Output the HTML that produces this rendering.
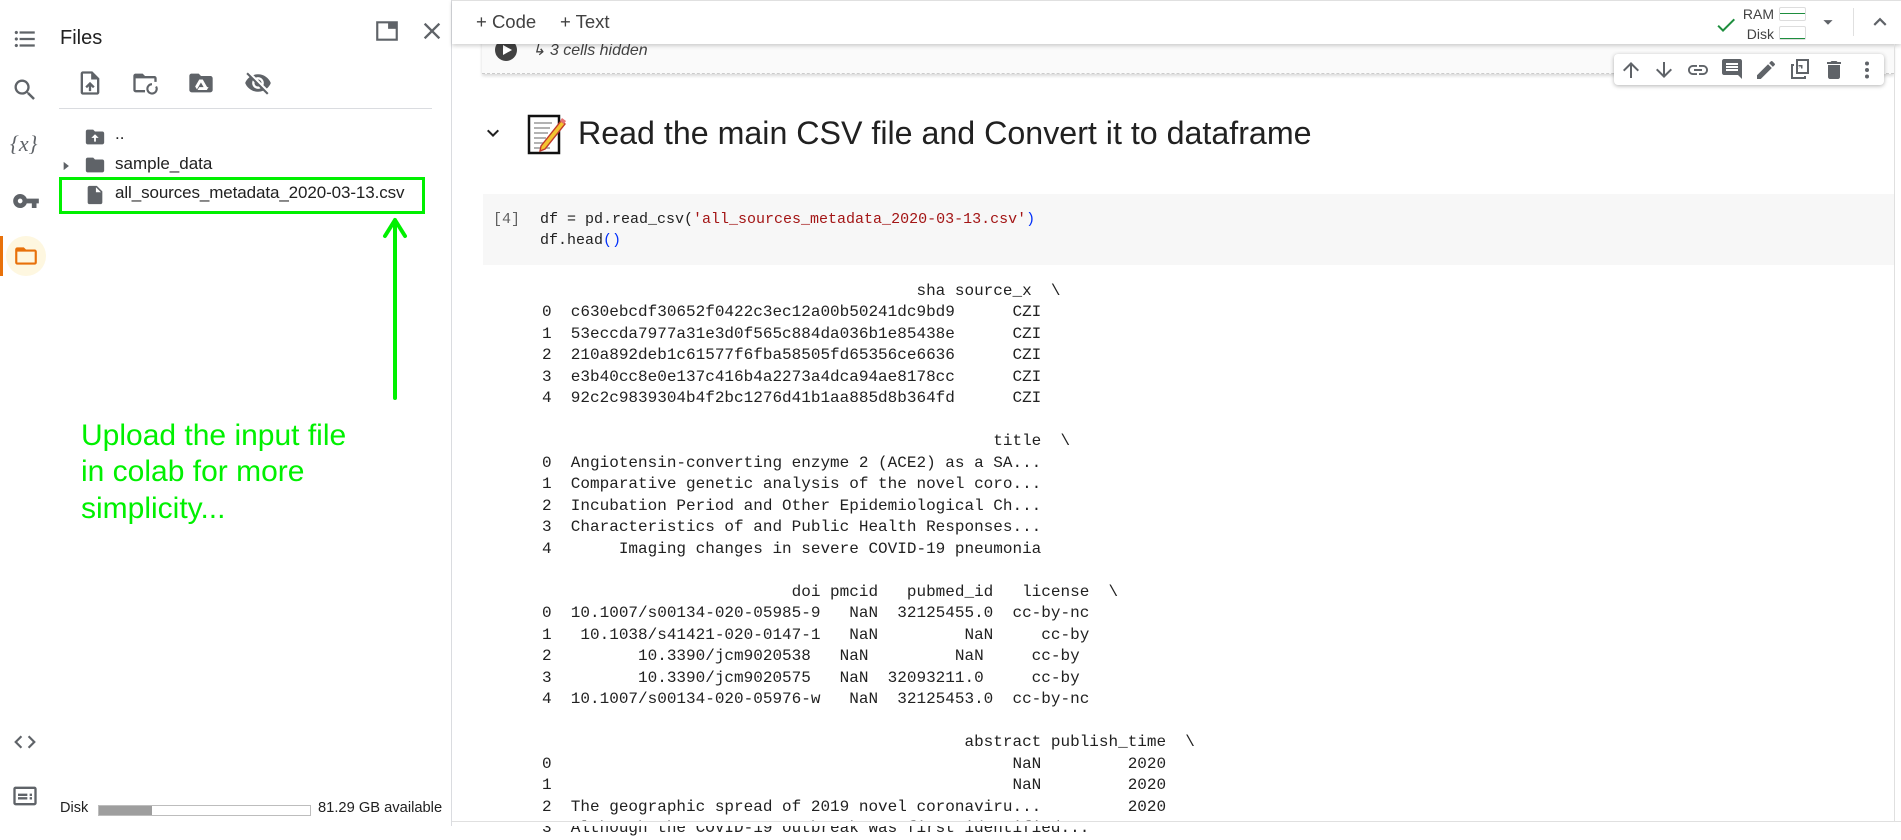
<!DOCTYPE html>
<html><head><meta charset="utf-8"><style>
*{margin:0;padding:0;box-sizing:border-box}
body{width:1901px;height:826px;overflow:hidden;background:#fff;font-family:"Liberation Sans",sans-serif;color:#212121;position:relative}
.a{position:absolute}
svg.i{position:absolute;fill:#5f6368}
pre{font-family:"Liberation Mono",monospace;font-size:16px;line-height:21.49px;color:#212121;position:absolute}
</style></head><body>
<!-- left rail -->
<div class="a" style="left:0;top:0;width:452px;height:826px;border-right:1px solid #dadce0"></div>
<svg class="i" style="left:12px;top:26px" width="26" height="26" viewBox="0 0 24 24"><path d="M4 10.5c-.83 0-1.5.67-1.5 1.5s.67 1.5 1.5 1.5 1.5-.67 1.5-1.5-.67-1.5-1.5-1.5zm0-6c-.83 0-1.5.67-1.5 1.5S3.170 7.5 4 7.5 5.5 6.83 5.5 6 4.83 4.5 4 4.5zm0 12c-.83 0-1.5.68-1.5 1.5s.68 1.5 1.5 1.5 1.5-.68 1.5-1.5-.67-1.5-1.5-1.5zM7 19h14v-2H7v2zm0-6h14v-2H7v2zm0-8v2h14V5H7z"/></svg>
<svg class="i" style="left:11px;top:76px" width="28" height="28" viewBox="0 0 24 24"><path d="M15.5 14h-.79l-.28-.27C15.41 12.59 16 11.11 16 9.5 16 5.91 13.09 3 9.5 3S3 5.91 3 9.5 5.910 16 9.5 16c1.61 0 3.09-.59 4.23-1.57l.27.28v.79l5 4.99L20.49 19l-4.99-5zm-6 0C7.01 14 5 11.99 5 9.5S7.01 5 9.5 5 14 7.01 14 9.5 11.99 14 9.5 14z"/></svg>
<div class="a" style="left:10px;top:131px;font-family:'Liberation Serif',serif;font-style:italic;font-size:22px;color:#5f6368">{<i>x</i>}</div>
<svg class="i" style="left:12px;top:187px" width="28" height="28" viewBox="0 0 24 24"><path d="M12.65 10C11.83 7.67 9.61 6 7 6c-3.31 0-6 2.69-6 6s2.69 6 6 6c2.61 0 4.83-1.67 5.65-4H17v4h4v-4h2v-4H12.65zM7 14c-1.1 0-2-.9-2-2s.9-2 2-2 2 .9 2 2-.9 2-2 2z"/></svg>
<div class="a" style="left:0;top:236px;width:3px;height:40px;background:#e8710a"></div>
<div class="a" style="left:6px;top:236px;width:40px;height:40px;border-radius:50%;background:#fef7e0"></div>
<svg class="i" style="left:13px;top:243px;fill:#e8710a" width="26" height="26" viewBox="0 0 24 24"><path d="M20 6h-8l-2-2H4c-1.1 0-1.99.9-1.99 2L2 18c0 1.1.9 2 2 2h16c1.1 0 2-.9 2-2V8c0-1.1-.9-2-2-2zm0 12H4V8h16v10z"/></svg>
<svg class="i" style="left:12px;top:729px" width="26" height="26" viewBox="0 0 24 24"><path d="M9.4 16.6L4.8 12l4.6-4.6L8 6l-6 6 6 6 1.4-1.4zm5.2 0l4.6-4.6-4.6-4.6L16 6l6 6-6 6-1.4-1.4z"/></svg>
<svg class="i" style="left:11px;top:782px" width="28" height="28" viewBox="0 0 24 24"><path d="M20 4H4c-1.1 0-2 .9-2 2v12c0 1.1.9 2 2 2h16c1.1 0 2-.9 2-2V6c0-1.1-.9-2-2-2zm0 14H4V6h16v12zM6 10h8v2H6zm0 3h8v2H6zm10-3h2v2h-2zm0 3h2v2h-2z"/></svg>

<!-- files panel -->
<div class="a" style="left:60px;top:27px;font-size:20px;color:#212121">Files</div>
<svg class="i" style="left:374px;top:18px" width="26" height="26" viewBox="0 0 24 24"><path d="M3 4h18v16H3z" fill="none" stroke="#5f6368" stroke-width="2"/><path d="M13 4h8v6h-8z"/></svg>
<svg class="i" style="left:418px;top:17px" width="28" height="28" viewBox="0 0 24 24"><path d="M19 6.41L17.59 5 12 10.59 6.41 5 5 6.41 10.59 12 5 17.59 6.41 19 12 13.41 17.59 19 19 17.59 13.41 12z"/></svg>
<svg class="i" style="left:76px;top:69px" width="28" height="28" viewBox="0 0 24 24"><path d="M14 2H6c-1.1 0-2 .9-2 2v16c0 1.1.9 2 2 2h12c1.1 0 2-.9 2-2V8l-6-6zm4 18H6V4h7v5h5v11zM8 15.01l1.41 1.41L11 14.84V19h2v-4.16l1.59 1.59L16 15.01 12.01 11z"/></svg>
<svg class="i" style="left:131px;top:69px" width="28" height="28" viewBox="0 0 24 24"><path d="M20 6h-8l-2-2H4c-1.1 0-2 .9-2 2v12c0 1.1.9 2 2 2h8v-2H4V8h16v3h2V8c0-1.1-.9-2-2-2z"/><path d="M18 13a4 4 0 1 0 3.5 2" fill="none" stroke="#5f6368" stroke-width="1.8"/></svg>
<svg class="i" style="left:187px;top:69px" width="28" height="28" viewBox="0 0 24 24"><path d="M20 6h-8l-2-2H4c-1.1 0-2 .9-2 2v12c0 1.1.9 2 2 2h16c1.1 0 2-.9 2-2V8c0-1.1-.9-2-2-2z"/><path d="M10.5 9l-3.5 6 1.5 2.5L12 11.5zM13.5 9h-3l4 7h3zM9 18h8l1.5-2.5h-8z" fill="#fff"/></svg>
<svg class="i" style="left:244px;top:69px" width="28" height="28" viewBox="0 0 24 24"><path d="M12 7c2.76 0 5 2.24 5 5 0 .65-.13 1.26-.36 1.83l2.92 2.92c1.51-1.26 2.7-2.89 3.43-4.75-1.73-4.39-6-7.5-11-7.5-1.4 0-2.74.25-3.98.7l2.16 2.16C10.74 7.13 11.35 7 12 7zM2 4.27l2.28 2.28.46.46C3.08 8.3 1.78 10.02 1 12c1.73 4.39 6 7.5 11 7.5 1.55 0 3.03-.3 4.38-.84l.42.42L19.73 22 21 20.73 3.27 3 2 4.27zM7.53 9.8l1.55 1.55c-.05.21-.08.43-.08.65 0 1.66 1.34 3 3 3 .22 0 .44-.03.65-.08l1.55 1.55c-.67.33-1.41.53-2.2.53-2.76 0-5-2.24-5-5 0-.79.2-1.53.53-2.2zm4.31-.78l3.15 3.15.02-.16c0-1.66-1.34-3-3-3l-.17.01z"/></svg>
<div class="a" style="left:59px;top:108px;width:373px;height:1px;background:#dadce0"></div>
<svg class="i" style="left:84px;top:126px" width="22" height="22" viewBox="0 0 24 24"><path d="M20 6h-8l-2-2H4c-1.1 0-2 .9-2 2v12c0 1.1.9 2 2 2h16c1.1 0 2-.9 2-2V8c0-1.1-.9-2-2-2z"/><path d="M12 9l-4 4h3v4h2v-4h3z" fill="#fff"/></svg>
<div class="a" style="left:115px;top:124px;font-size:17px">..</div>
<svg class="i" style="left:59px;top:159px" width="14" height="14" viewBox="0 0 24 24"><path d="M8 5v14l9-7z"/></svg>
<svg class="i" style="left:84px;top:154px" width="22" height="22" viewBox="0 0 24 24"><path d="M10 4H4c-1.1 0-1.99.9-1.99 2L2 18c0 1.1.9 2 2 2h16c1.1 0 2-.9 2-2V8c0-1.1-.9-2-2-2h-8l-2-2z"/></svg>
<div class="a" style="left:115px;top:154px;font-size:17px">sample_data</div>
<svg class="i" style="left:84px;top:184px" width="22" height="22" viewBox="0 0 24 24"><path d="M14 2H6c-1.1 0-2 .9-2 2v16c0 1.1.9 2 2 2h12c1.1 0 2-.9 2-2V8l-6-6zm-1 7V3.5L18.5 9H13z"/></svg>
<div class="a" style="left:115px;top:183px;font-size:17px;letter-spacing:-0.1px">all_sources_metadata_2020-03-13.csv</div>
<div class="a" style="left:59px;top:177px;width:366px;height:37px;border:3px solid #00f000"></div>
<svg class="a" style="left:380px;top:214px" width="30" height="186" viewBox="0 0 30 186"><path d="M15 184V6M5 22L15 6 25 22" fill="none" stroke="#00f000" stroke-width="4" stroke-linecap="round" stroke-linejoin="round"/></svg>
<div class="a" style="left:81px;top:418px;font-size:30px;line-height:36.4px;color:#00f000">Upload the input file<br>in colab for more<br>simplicity...</div>
<div class="a" style="left:60px;top:800px;font-size:14.5px">Disk</div>
<div class="a" style="left:98px;top:805px;width:213px;height:11px;border:1px solid #bdbdbd"><div style="width:53px;height:9px;background:#9e9e9e"></div></div>
<div class="a" style="left:318px;top:800px;font-size:14.7px">81.29 GB available</div>

<!-- main -->
<div class="a" style="left:482px;top:30px;width:1412px;height:44px;background:#fafafa;border-bottom:1px dashed #ccc;box-shadow:0 2px 3px rgba(0,0,0,.15)"></div>
<div class="a" style="left:495px;top:39px;width:22px;height:22px;border-radius:50%;background:#424242"></div>
<svg class="a" style="left:501px;top:44px" width="12" height="12" viewBox="0 0 12 12"><path d="M2 1l9 5-9 5z" fill="#fff"/></svg>
<div class="a" style="left:532px;top:40px;font-size:16px;font-style:italic;color:#424242">↳ 3 cells hidden</div>
<div class="a" style="left:452px;top:0;width:1449px;height:44px;background:#fff;box-shadow:0 2px 4px rgba(0,0,0,.18);border-top:1px solid #e0e0e0"></div>
<div class="a" style="left:476px;top:11px;font-size:18.5px;color:#424242">+ Code</div>
<div class="a" style="left:560px;top:11px;font-size:18.5px;color:#424242">+ Text</div>
<svg class="i" style="left:1714px;top:13px;fill:#1e8e3e" width="24" height="24" viewBox="0 0 24 24"><path d="M9 16.17L4.83 12l-1.42 1.41L9 19 21 7l-1.41-1.41z"/></svg>
<div class="a" style="left:1741px;top:4px;font-size:14px;color:#424242;line-height:20px;text-align:right;width:33px">RAM<br>Disk</div>
<div class="a" style="left:1779px;top:7px;width:27px;height:14px;border:1px solid #ddd;border-radius:2px"><div style="margin-top:5px;height:1px;background:#1e8e3e"></div></div>
<div class="a" style="left:1779px;top:26px;width:27px;height:14px;border:1px solid #ddd;border-radius:2px"><div style="margin-top:11px;height:1px;background:#1e8e3e"></div></div>
<svg class="i" style="left:1817px;top:11px" width="22" height="22" viewBox="0 0 24 24"><path d="M7 10l5 5 5-5z"/></svg>
<div class="a" style="left:1853px;top:8px;width:1px;height:28px;background:#e0e0e0"></div>
<svg class="i" style="left:1867px;top:9px" width="26" height="26" viewBox="0 0 24 24"><path d="M7.41 15.41L12 10.83l4.59 4.58L18 14l-6-6-6 6z"/></svg>
<div class="a" style="left:1894px;top:44px;width:1px;height:782px;background:#e0e0e0"></div>
<!-- cell toolbar -->
<div class="a" style="left:1614px;top:54px;width:270px;height:31px;background:#fff;border-radius:4px;box-shadow:0 1px 4px rgba(0,0,0,.3)"></div>
<svg class="i" style="left:1619px;top:58px" width="24" height="24" viewBox="0 0 24 24"><path d="M4 12l1.41 1.41L11 7.83V20h2V7.83l5.58 5.59L20 12l-8-8-8 8z"/></svg>
<svg class="i" style="left:1652px;top:58px" width="24" height="24" viewBox="0 0 24 24"><path d="M20 12l-1.41-1.41L13 16.17V4h-2v12.17l-5.58-5.59L4 12l8 8 8-8z"/></svg>
<svg class="i" style="left:1686px;top:58px" width="24" height="24" viewBox="0 0 24 24"><path d="M3.9 12c0-1.71 1.39-3.1 3.1-3.1h4V7H7c-2.76 0-5 2.24-5 5s2.24 5 5 5h4v-1.9H7c-1.71 0-3.1-1.39-3.1-3.1zM8 13h8v-2H8v2zm9-6h-4v1.9h4c1.71 0 3.1 1.39 3.1 3.1s-1.39 3.1-3.1 3.1h-4V17h4c2.76 0 5-2.24 5-5s-2.24-5-5-5z"/></svg>
<svg class="i" style="left:1720px;top:57px" width="24" height="24" viewBox="0 0 24 24"><path d="M21.99 4c0-1.1-.89-2-1.99-2H4c-1.1 0-2 .9-2 2v12c0 1.1.9 2 2 2h14l4 4-.01-18zM18 14H6v-2h12v2zm0-3H6V9h12v2zm0-3H6V6h12v2z"/></svg>
<svg class="i" style="left:1754px;top:58px" width="24" height="24" viewBox="0 0 24 24"><path d="M3 17.25V21h3.75L17.81 9.94l-3.75-3.75L3 17.25zM20.71 7.04c.39-.39.39-1.02 0-1.41l-2.34-2.34c-.39-.39-1.02-.39-1.41 0l-1.83 1.83 3.75 3.75 1.83-1.83z"/></svg>
<svg class="i" style="left:1788px;top:57px" width="24" height="24" viewBox="0 0 24 24"><path d="M8 2h13v15H8z M10 4v11h9V4z M3 7h3v2H5v11h11v-1h2v3H3z M9 13l4-4v2.5h1.5V8H10.5V9.5H13z"/></svg>
<svg class="i" style="left:1822px;top:58px" width="24" height="24" viewBox="0 0 24 24"><path d="M6 19c0 1.1.9 2 2 2h8c1.1 0 2-.9 2-2V7H6v12zM19 4h-3.5l-1-1h-5l-1 1H5v2h14V4z"/></svg>
<svg class="i" style="left:1855px;top:58px" width="24" height="24" viewBox="0 0 24 24"><circle cx="12" cy="5.5" r="2"/><circle cx="12" cy="12" r="2"/><circle cx="12" cy="18.5" r="2"/></svg>

<!-- heading -->
<svg class="i" style="left:481px;top:121px;fill:#212121" width="24" height="24" viewBox="0 0 24 24"><path d="M7.41 8.59L12 13.17l4.59-4.58L18 10l-6 6-6-6z"/></svg>
<svg class="a" style="left:527px;top:113px" width="40" height="42" viewBox="0 0 40 42"><rect x="2" y="3" width="30" height="37" fill="#fff" stroke="#111" stroke-width="2.5"/><g stroke="#999" stroke-width="1.6"><path d="M7 10h18M7 15h16M7 20h14M7 25h12M7 30h10M7 35h16"/></g><path d="M14 33l20-25 4 3-20 25-5 2z" fill="#f4c430" stroke="#c0392b" stroke-width="1.4"/><path d="M33 8l2-3 4 3-2 3z" fill="#e57373"/></svg>
<div class="a" style="left:578px;top:115px;font-size:32.2px;color:#212121">Read the main CSV file and Convert it to dataframe</div>

<!-- code cell -->
<div class="a" style="left:483px;top:194px;width:1411px;height:71px;background:#f7f7f7"></div>
<pre style="left:493px;top:209px;color:#616161;font-size:15px">[4]</pre>
<pre style="left:540px;top:209px;font-size:15px">df = pd.read_csv(<span style="color:#a31515">'all_sources_metadata_2020-03-13.csv'</span><span style="color:#0431fa">)</span>
df.head<span style="color:#0431fa">()</span></pre>

<pre style="left:542px;top:281px">                                       sha source_x  \
0  c630ebcdf30652f0422c3ec12a00b50241dc9bd9      CZI   
1  53eccda7977a31e3d0f565c884da036b1e85438e      CZI   
2  210a892deb1c61577f6fba58505fd65356ce6636      CZI   
3  e3b40cc8e0e137c416b4a2273a4dca94ae8178cc      CZI   
4  92c2c9839304b4f2bc1276d41b1aa885d8b364fd      CZI   

                                               title  \
0  Angiotensin-converting enzyme 2 (ACE2) as a SA...   
1  Comparative genetic analysis of the novel coro...   
2  Incubation Period and Other Epidemiological Ch...   
3  Characteristics of and Public Health Responses...   
4       Imaging changes in severe COVID-19 pneumonia   

                          doi pmcid   pubmed_id   license  \
0  10.1007/s00134-020-05985-9   NaN  32125455.0  cc-by-nc   
1   10.1038/s41421-020-0147-1   NaN         NaN     cc-by   
2         10.3390/jcm9020538   NaN         NaN     cc-by   
3         10.3390/jcm9020575   NaN  32093211.0     cc-by   
4  10.1007/s00134-020-05976-w   NaN  32125453.0  cc-by-nc   

                                            abstract publish_time  \
0                                                NaN         2020   
1                                                NaN         2020   
2  The geographic spread of 2019 novel coronaviru...         2020   
3  Although the COVID-19 outbreak was first identified...</pre>
<div class="a" style="left:452px;top:821px;width:1449px;height:5px;background:#fff;border-top:1px solid #e0e0e0"></div>
</body></html>
